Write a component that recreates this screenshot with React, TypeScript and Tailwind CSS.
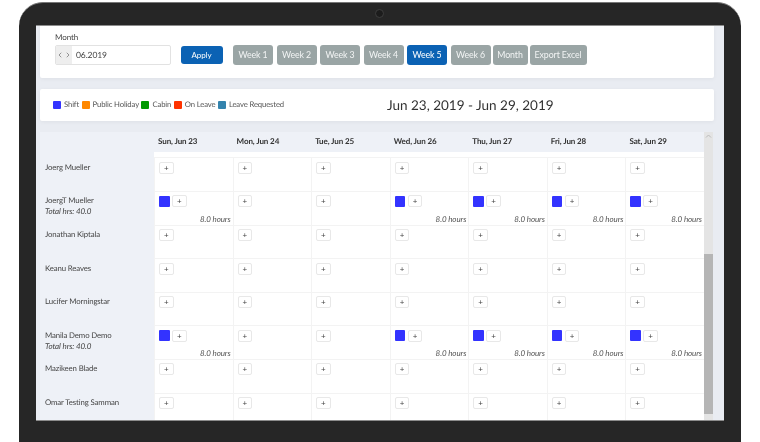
import { ChevronLeft, ChevronRight } from "lucide-react";

const days = ["Sun, Jun 23", "Mon, Jun 24", "Tue, Jun 25", "Wed, Jun 26", "Thu, Jun 27", "Fri, Jun 28", "Sat, Jun 29"];
const shiftDays = [0, 3, 4, 5, 6];

const people = [
  { name: "Joerg Mueller" },
  { name: "JoergT Mueller", total: "Total hrs: 40.0" },
  { name: "Jonathan Kiptala" },
  { name: "Keanu Reaves" },
  { name: "Lucifer Morningstar" },
  { name: "Manila Demo Demo", total: "Total hrs: 40.0" },
  { name: "Mazikeen Blade" },
  { name: "Omar Testing Samman" },
];

const legend = [
  { label: "Shift", color: "bg-[#3333ff]" },
  { label: "Public Holiday", color: "bg-[#ff8800]" },
  { label: "Cabin", color: "bg-[#009900]" },
  { label: "On Leave", color: "bg-[#ff3300]" },
  { label: "Leave Requested", color: "bg-[#3383ad]" },
];

const weeks = [
  { label: "Week 1", cls: "w-[40px] mr-[3.5px]" },
  { label: "Week 2", cls: "w-[40px] mr-[3.5px]" },
  { label: "Week 3", cls: "w-[40px] mr-[3.5px]" },
  { label: "Week 4", cls: "w-[40px] mr-[3.5px]" },
  { label: "Week 5", cls: "w-[40px] mr-[3.5px]", active: true },
  { label: "Week 6", cls: "w-[40px] mr-[2px]" },
  { label: "Month", cls: "w-[35px] mr-[2px]" },
  { label: "Export Excel", cls: "w-[57px]" },
];

function AddButton() {
  return (
    <button className="flex h-[12px] w-[14.5px] items-center justify-center rounded-[2px] border border-[#e8e8e8] bg-white text-[8px] leading-none text-[#444]">
      +
    </button>
  );
}

function DayCell({ hasShift }: { hasShift: boolean }) {
  return (
    <div className="relative h-[33.6px] border-t border-l border-[#f3f3f3] bg-white pt-[3.5px] pl-[4px]">
      <div className="flex items-center gap-[2.5px]">
        {hasShift && <span className="h-[11px] w-[10.5px] rounded-[1px] bg-[#3333ff]" />}
        <AddButton />
      </div>
      {hasShift && (
        <p className="absolute right-[2px] bottom-[0.5px] text-[8px] leading-[10px] tracking-[-0.1px] text-[#555] italic">8.0 hours</p>
      )}
    </div>
  );
}

export default function App() {
  return (
    <div className="h-[442px] w-[760px] overflow-hidden bg-white px-[19px] pt-[2px] font-['Lato',sans-serif] [text-rendering:geometricPrecision]">
      <div className="relative h-[440px] rounded-t-[24px] border-t border-[#777] bg-[#262626] px-[17px] pt-[22px]">
        <span className="absolute top-[6px] left-[356px] h-[9px] w-[9px] rounded-full border border-[#3d3d3d] bg-[#1c1c1c]" />
        <div className="h-[396px] overflow-hidden border-t border-b border-[#8c8c8c] bg-[#e9ecf2] pr-[10px] pl-[4px] blur-[0.3px]">
          <div className="flex h-[52px] flex-col rounded-b-[2px] bg-white pl-[15px] shadow-[0_1px_4px_rgba(0,0,0,0.05)]">
            <p className="mt-[6px] text-[8px] leading-[10px] tracking-[-0.1px] text-[#444]">Month</p>
            <div className="mt-[3px] flex items-center">
              <div className="flex h-[20px] w-[116px] overflow-hidden rounded-[2px] border border-[#e2e2e2]">
                <div className="flex w-[16px] items-center justify-center bg-[#eeeeee] text-[#666]">
                  <ChevronLeft size={8} strokeWidth={2} />
                  <ChevronRight size={8} strokeWidth={2} />
                </div>
                <span className="pl-[4px] text-[8.5px] leading-[18px] tracking-[-0.1px] text-[#444]">06.2019</span>
              </div>
              <button className="ml-[9.5px] h-[18px] w-[42px] rounded-[3px] bg-[#0b62b4] text-[8px] tracking-[-0.1px] text-white">Apply</button>
              <div className="ml-[10.5px] flex">
                {weeks.map((w) => (
                  <button
                    key={w.label}
                    className={`h-[19.5px] rounded-[3px] text-[8.8px] tracking-[-0.1px] ${w.cls} ${w.active ? "bg-[#0b62b4] text-white" : "bg-[#9aa5a5] text-[#f2f4f4]"}`}
                  >
                    {w.label}
                  </button>
                ))}
              </div>
            </div>
          </div>

          <div className="mt-[11px] flex h-[32px] items-center rounded-[2px] bg-white pl-[13px] shadow-[0_1px_4px_rgba(0,0,0,0.05)]">
            <div className="flex w-[334px] items-center gap-[2.5px]">
              {legend.map((l) => (
                <div key={l.label} className="flex items-center gap-[3px]">
                  <span className={`h-[8.5px] w-[8px] rounded-[1px] ${l.color}`} />
                  <span className="text-[7.7px] tracking-[-0.13px] text-[#555]">{l.label}</span>
                </div>
              ))}
            </div>
            <h2 className="text-[13.5px] text-[#333]">Jun 23, 2019 - Jun 29, 2019</h2>
          </div>

          <div className="mt-[11px] flex">
            <div className="w-[664px]">
              <div className="grid grid-cols-[114px_repeat(7,1fr)]">
                <div className="h-[20px] bg-[#eef1f7]" />
                {days.map((d) => (
                  <div key={d} className="h-[20px] bg-[#eef1f7] pl-[4px] text-[8px] leading-[19px] font-bold tracking-[-0.1px] text-[#333]">
                    {d}
                  </div>
                ))}
                <div className="h-[5.4px] bg-[#eef1f7]" />
                <div className="col-span-7 h-[5.4px] bg-white" />
                {people.map((p) => (
                  <div key={p.name} className="contents">
                    <div className="h-[33.6px] bg-[#eef1f7] pt-[4.5px] pl-[5px]">
                      <p className="text-[7.8px] leading-[11px] tracking-[-0.12px] text-[#444]">{p.name}</p>
                      {p.total && <p className="text-[8px] leading-[10px] tracking-[-0.1px] text-[#444] italic">{p.total}</p>}
                    </div>
                    {days.map((d, j) => (
                      <DayCell key={d} hasShift={!!p.total && shiftDays.includes(j)} />
                    ))}
                  </div>
                ))}
              </div>
            </div>
            <div className="flex h-[288px] w-[9px] flex-col bg-[#e4e4e4]">
              <svg viewBox="0 0 9 8" className="h-[8px] w-[9px] text-[#bbb]">
                <path d="M2 5.5 4.5 3 7 5.5" fill="none" stroke="currentColor" strokeWidth="1" />
              </svg>
              <div className="mt-[114px] h-[160px] bg-[#b5b5b5]" />
            </div>
          </div>
        </div>
      </div>
    </div>
  );
}
